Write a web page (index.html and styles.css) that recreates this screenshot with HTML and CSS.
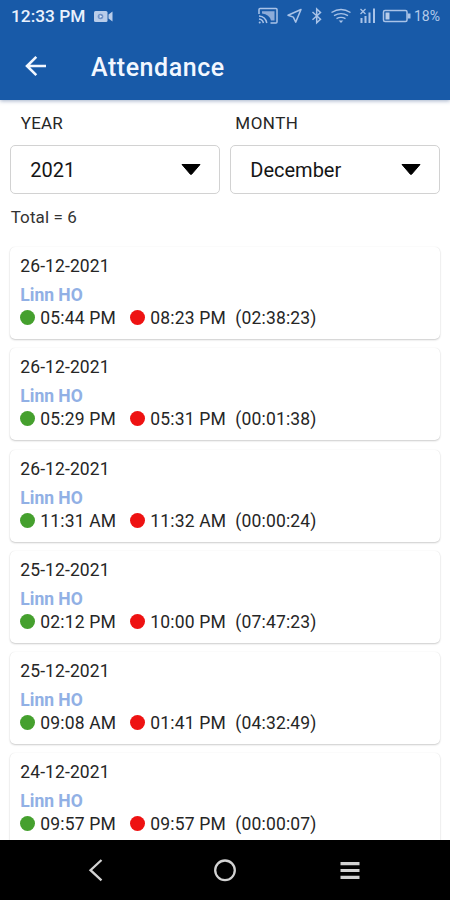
FILE: index.html
```
<!DOCTYPE html>
<html lang="en">
<head>
<meta charset="utf-8">
<title>Attendance</title>
<link rel="stylesheet" href="styles.css">
</head>
<body>
<div class="screen">
  <header class="header">
    <div class="status">
      <span class="clock">12:33 PM</span>
      <svg class="cam" width="19" height="13" viewBox="0 0 19 13"><rect x="0" y="1" width="13.500" height="11" rx="1.500" fill="#b9cdea"/><path d="M14.500 4.500L18.500 1.500v10l-4-3z" fill="#b9cdea"/><circle cx="6.500" cy="6.500" r="2.800" fill="#6f92c8"/><path d="M5.700 5l2.500 1.500-2.500 1.500z" fill="#e4edfa"/></svg>
      <svg class="sys" width="156" height="20" viewBox="0 0 156 20" fill="none" stroke="#a9c3e8" stroke-width="1.500">
        <path d="M1 8V3.500Q1 2.500 2 2.500H18Q19 2.500 19 3.500V16Q19 17 18 17H12.500"/>
        <path d="M4 5.200h12.500v9.300h-3.500q-1.500-6-9-7z" fill="#8dacd9" stroke="none"/>
        <path d="M1 10q6.500 .5 7.800 7M1 13q3.700 .4 4.400 4"/><circle cx="1.700" cy="16.400" r="1" fill="#a9c3e8" stroke="none"/>
        <path d="M43 3.500L30 9.200l5.300 1.900 2.400 5z" stroke-linejoin="round"/>
        <path d="M54.500 6l8 7.200-3.800 3.600V3l3.800 3.500-8 7.200"/>
        <path d="M73.500 6.500q9.500-6 19 0M76 9.700q7-4.200 14 0M78.500 12.700q4.500-2.600 9 0" stroke-width="1.400"/><path d="M80.700 14.500h4.600l-2.300 2.500z" fill="#a9c3e8" stroke="none"/>
        <path d="M103.500 12v5M107.500 10v7M111.500 6.500v10.500M116 2.500v14.500" stroke-width="2"/>
        <path d="M102.500 3l5 5M107.500 3l-5 5" stroke-width="1.300"/>
        <rect x="125.500" y="4.500" width="23.500" height="11" rx="1.500"/><path d="M149.500 7.500h3v5h-3z" fill="#a9c3e8" stroke="none"/><path d="M127.500 6.500h4v7h-4z" fill="#b9cdea" stroke="none"/>
      </svg>
      <span class="percent">18%</span>
    </div>
    <div class="bar">
      <svg class="back" width="24" height="24" viewBox="0 0 24 24" fill="none" stroke="#f2f7ff" stroke-width="2.600"><path d="M22 12H3.500M12.300 2.800L3 12l9.300 9.200"/></svg>
      <h1 class="title">Attendance</h1>
    </div>
  </header>
  <main class="content">
    <div class="filters">
      <div class="field">
        <label class="label">YEAR</label>
        <div class="select"><span>2021</span><svg width="22" height="13" viewBox="0 0 22 13"><path d="M2 1.500H20L11.800 11Q11 12 10.200 11z" fill="#000" stroke="#000" stroke-linejoin="round"/></svg></div>
      </div>
      <div class="field">
        <label class="label month">MONTH</label>
        <div class="select"><span>December</span><svg width="22" height="13" viewBox="0 0 22 13"><path d="M2 1.500H20L11.800 11Q11 12 10.200 11z" fill="#000" stroke="#000" stroke-linejoin="round"/></svg></div>
      </div>
    </div>
    <div class="total">Total = 6</div>
    <div class="list">
      <article class="card"><div class="date">26-12-2021</div><div class="name">Linn HO</div><div class="times"><i class="dot in"></i><span class="start">05:44 PM</span><i class="dot out"></i><span class="end">08:23 PM</span><span class="span">(02:38:23)</span></div></article>
      <article class="card"><div class="date">26-12-2021</div><div class="name">Linn HO</div><div class="times"><i class="dot in"></i><span class="start">05:29 PM</span><i class="dot out"></i><span class="end">05:31 PM</span><span class="span">(00:01:38)</span></div></article>
      <article class="card"><div class="date">26-12-2021</div><div class="name">Linn HO</div><div class="times"><i class="dot in"></i><span class="start">11:31 AM</span><i class="dot out"></i><span class="end">11:32 AM</span><span class="span">(00:00:24)</span></div></article>
      <article class="card"><div class="date">25-12-2021</div><div class="name">Linn HO</div><div class="times"><i class="dot in"></i><span class="start">02:12 PM</span><i class="dot out"></i><span class="end">10:00 PM</span><span class="span">(07:47:23)</span></div></article>
      <article class="card"><div class="date">25-12-2021</div><div class="name">Linn HO</div><div class="times"><i class="dot in"></i><span class="start">09:08 AM</span><i class="dot out"></i><span class="end">01:41 PM</span><span class="span">(04:32:49)</span></div></article>
      <article class="card"><div class="date">24-12-2021</div><div class="name">Linn HO</div><div class="times"><i class="dot in"></i><span class="start">09:57 PM</span><i class="dot out"></i><span class="end">09:57 PM</span><span class="span">(00:00:07)</span></div></article>
    </div>
  </main>
  <nav class="nav">
    <svg width="24" height="24" viewBox="0 0 24 24" fill="none" stroke="#d2d2d2" stroke-width="2.300"><path d="M17.500 2L6.500 12.200l11 10.200"/></svg>
    <svg width="24" height="24" viewBox="0 0 24 24" fill="none" stroke="#d2d2d2" stroke-width="2.300"><circle cx="12" cy="12.300" r="9.800"/></svg>
    <svg width="24" height="24" viewBox="0 0 24 24" fill="none" stroke="#d2d2d2" stroke-width="3.200"><path d="M2.500 5.700h19M2.500 12.500h19M2.500 19.300h19"/></svg>
  </nav>
</div>
</body>
</html>
```
FILE: styles.css
```
* { box-sizing: border-box; }
body { margin: 0; font-family: Roboto, "Liberation Sans", sans-serif; background: #fff; color: #262626; }
.screen { width: 450px; height: 900px; display: flex; flex-direction: column; overflow: hidden; }
.header { flex: none; height: 100px; background: #185aa8; box-shadow: 0 1px 4px rgba(24, 60, 120, .4); z-index: 1; }
.status { height: 32px; display: flex; align-items: center; padding-left: 11px; }
.clock { width: 83px; font-size: 17.300px; font-weight: 500; color: #e9f1fd; white-space: nowrap; }
.sys { margin-left: 145px; flex: none; }
.percent { font-size: 14px; color: #b4caea; white-space: nowrap; }
.bar { height: 68px; display: flex; align-items: center; padding: 0 0 0 24px; }
.back { margin-top: -1px; }
.title { margin: 4px 0 0 43px; font-size: 25px; line-height: 30px; font-weight: 500; letter-spacing: .55px; color: #f2f7ff; }
.content { flex: 1; min-height: 0; overflow: hidden; padding: 13px 9.700px 0 10.300px; }
.filters { display: grid; grid-template-columns: 1fr 1fr; gap: 10px; }
.label { display: block; height: 31.500px; padding-left: 10.500px; font-size: 17px; line-height: 20px; letter-spacing: .2px; }
.month { padding-left: 5px; letter-spacing: .5px; }
.select { height: 49.500px; display: flex; align-items: center; justify-content: space-between; border: 1.500px solid #d2d2d2; border-radius: 5px; padding: 1px 17.500px 0 19px; font-size: 20px; color: #151515; }
.total { margin-top: 13px; height: 20px; font-size: 17px; line-height: 20px; letter-spacing: .1px; padding-left: .4px; color: #333; }
.list { margin-top: 20px; display: flex; flex-direction: column; gap: 9.300px; }
.card { flex: none; height: 92px; padding: 8px 10px 0; border-radius: 5px; background: #fff; box-shadow: 0 1px 2px rgba(0, 0, 0, .2), 0 0 1px rgba(0, 0, 0, .1); font-size: 17.500px; }
.date { line-height: 22px; letter-spacing: .1px; }
.name { margin-top: 7px; line-height: 22px; font-weight: 700; color: #91b0e5; }
.times { display: flex; align-items: center; margin-top: 1px; line-height: 22px; white-space: nowrap; letter-spacing: .17px; }
.dot { width: 15px; height: 15px; border-radius: 50%; margin: -1px 5px 0 0; }
.in { background: #45a02e; }
.out { background: #ee1212; }
.start { width: 90px; }
.end { width: 85px; }
.nav { flex: none; height: 60px; background: #000; display: flex; align-items: center; justify-content: space-between; padding: 0 88px 0 84px; }
.nav svg:nth-child(2) { margin-left: 4px; }
```
